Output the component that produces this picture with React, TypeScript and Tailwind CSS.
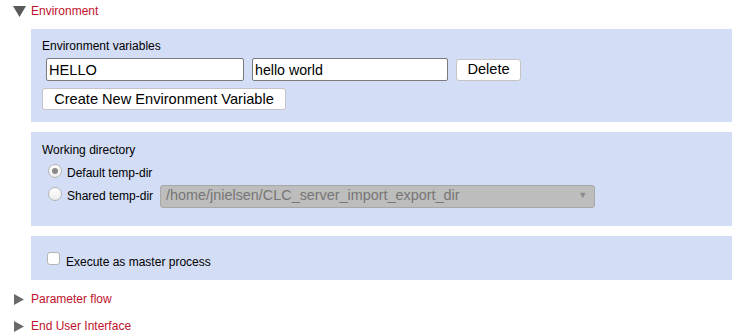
import React from "react";

function Caret({ open }: { open: boolean }) {
  return open ? (
    <svg width="13" height="11" viewBox="0 0 13 11" className="shrink-0">
      <polygon points="0,0 13,0 6.5,11" fill="#5a5a5a" />
    </svg>
  ) : (
    <svg width="10" height="11" viewBox="0 0 10 11" className="shrink-0">
      <polygon points="0,0 10,5.5 0,11" fill="#6a6a6a" />
    </svg>
  );
}

function SectionHeader({ title, open, className }: { title: string; open: boolean; className?: string }) {
  return (
    <div className={`flex items-center h-[22px] ${className || ""}`}>
      <div className={`w-[31px] flex ${open ? "pl-[13px]" : "pl-[14px]"}`}>
        <Caret open={open} />
      </div>
      <span className="text-[12px] text-[#c0122c]">{title}</span>
    </div>
  );
}

function Radio({ checked }: { checked?: boolean }) {
  return (
    <span className="w-[14px] h-[14px] rounded-full border border-[#b4b4b4] bg-gradient-to-b from-white to-[#ececec] flex items-center justify-center shrink-0">
      {checked ? <span className="w-[6px] h-[6px] rounded-full bg-[#8a8a8a]" /> : null}
    </span>
  );
}

export default function App() {
  return (
    <div className="w-[752px] h-[335px] bg-white text-black overflow-hidden" style={{ fontFamily: '"Liberation Sans", Arial, sans-serif' }}>
      <SectionHeader title="Environment" open />

      <div className="ml-[31px] w-[701px] mt-[7px] flex flex-col gap-[10px]">
        {/* Environment variables */}
        <div className="bg-[#d3ddf5] h-[93px] pl-[11px] pt-[10px]">
          <div className="text-[12px] leading-[14px]">Environment variables</div>
          <div className="flex items-center mt-[5px] ml-[4px]">
            <input
              readOnly
              value="HELLO"
              className="w-[198px] h-[23px] border border-[#7a7a7a] rounded-[2px] bg-white px-[2px] text-[14.6px] outline-none"
            />
            <input
              readOnly
              value="hello world"
              className="ml-[8px] w-[196px] h-[23px] border border-[#7a7a7a] rounded-[2px] bg-white px-[2px] text-[14.2px] outline-none"
            />
            <button className="ml-[8px] w-[65px] h-[22px] border border-[#c4c4c4] rounded-[3px] bg-white text-[14.6px] leading-none">
              Delete
            </button>
          </div>
          <button className="mt-[7px] w-[244px] h-[22px] border border-[#c4c4c4] rounded-[3px] bg-white text-[14.6px] leading-none">
            Create New Environment Variable
          </button>
        </div>

        {/* Working directory */}
        <div className="bg-[#d3ddf5] h-[94px] pl-[11px] pt-[11px]">
          <div className="text-[12px] leading-[14px]">Working directory</div>
          <div className="flex items-center mt-[7px] ml-[6px] h-[18px]">
            <span className="-mt-[4px]"><Radio checked /></span>
            <span className="ml-[5px] text-[12px]">Default temp-dir</span>
          </div>
          <div className="flex items-center ml-[6px] h-[24px] mt-[2px]">
            <span className="-mt-[4px]"><Radio /></span>
            <span className="ml-[5px] text-[12px]">Shared temp-dir</span>
            <div className="ml-[7px] w-[435px] h-[23px] bg-[#bdbdbd] border border-[#a8a8a8] rounded-[3px] flex items-center justify-between pl-[5px] pr-[7px]">
              <span className="text-[14.4px] text-[#767676]">/home/jnielsen/CLC_server_import_export_dir</span>
              <span className="text-[9px] text-[#8a8a8a]">▼</span>
            </div>
          </div>
        </div>

        {/* Master process */}
        <div className="bg-[#d3ddf5] h-[44px] pl-[16px] flex items-center pt-[8px]">
          <span className="-mt-[8px] w-[13px] h-[13px] rounded-[3px] border border-[#b4b4b4] bg-white shrink-0" />
          <span className="ml-[6px] text-[12px]">Execute as master process</span>
        </div>
      </div>

      <SectionHeader title="Parameter flow" open={false} className="mt-[8px]" />
      <SectionHeader title="End User Interface" open={false} className="mt-[5px]" />
    </div>
  );
}
